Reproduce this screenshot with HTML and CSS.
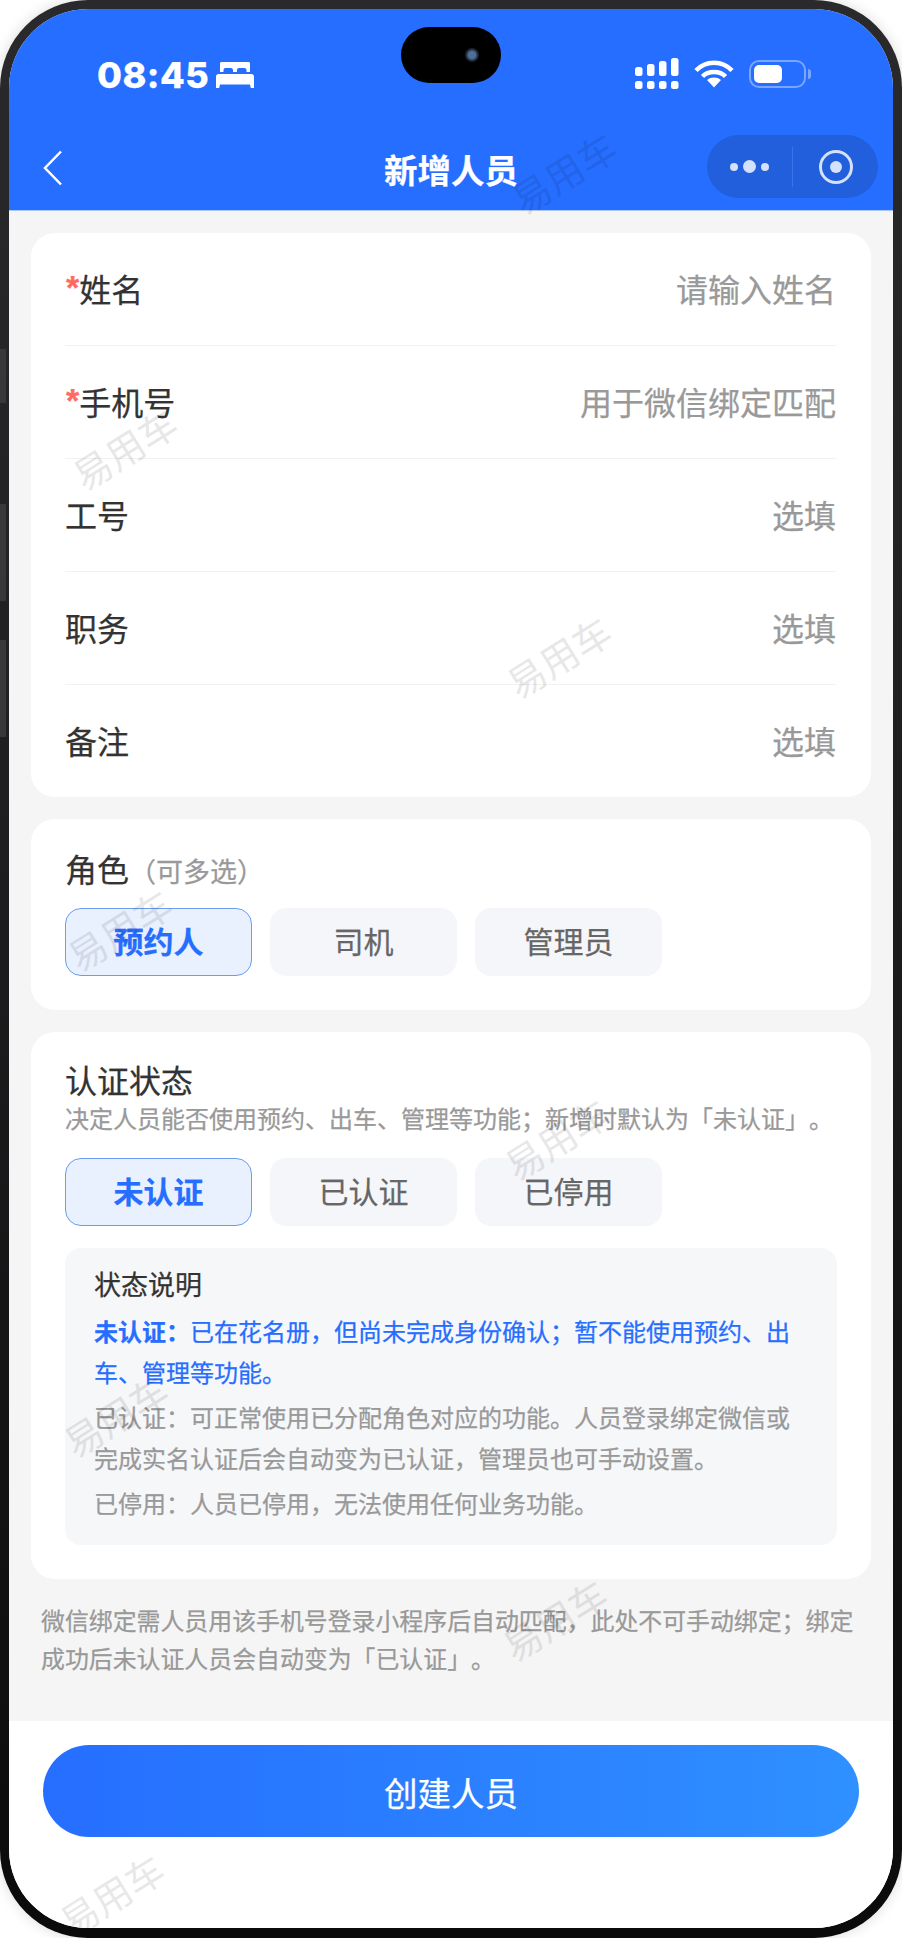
FILE: index.html
```html
<!DOCTYPE html>
<html lang="zh-CN">
<head>
    <meta charset="UTF-8">
    <meta name="viewport" content="width=device-width, initial-scale=1.0">
    <title>新增人员</title>
    <link rel="stylesheet" href="styles.css">
</head>
<body>

    <div class="phone">
        <div class="side-key side-key-1"></div>
        <div class="side-key side-key-2"></div>
        <div class="side-key side-key-3"></div>

        <div class="screen">
            <div class="header">
                <div class="status-bar">
                    <div class="status-left">
                        <span class="clock">08:45</span>
                        <svg class="bed" width="38" height="26" viewBox="0 0 38 26">
                            <path fill="#fff" d="M4 1.500C4 .7 4.700 0 5.500 0h27c.8 0 1.500.7 1.500 1.500V10h-3.500V8c0-1.100-.9-2-2-2h-5.500c-1.100 0-2 .9-2 2v2h-4V8c0-1.100-.9-2-2-2H9.500c-1.100 0-2 .9-2 2v2H4z"/>
                            <path fill="#fff" d="M2.500 12h33c1.400 0 2.500 1.100 2.500 2.500V26h-3.200l-.8-3.500H4L3.200 26H0V14.500C0 13.100 1.100 12 2.500 12z"/>
                        </svg>
                    </div>
                    <div class="island"><span class="camera"></span></div>
                    <div class="status-right">
                        <svg width="44" height="31" viewBox="0 0 44 31" fill="#fff">
                            <rect x="0" y="9" width="7.500" height="9" rx="2.500"/>
                            <rect x="12" y="6" width="7.500" height="12" rx="2.500"/>
                            <rect x="24" y="3" width="7.500" height="15" rx="2.500"/>
                            <rect x="36" y="0" width="7.500" height="18" rx="2.500"/>
                            <rect x="0" y="23" width="7.500" height="8" rx="2.500"/>
                            <rect x="12" y="23" width="7.500" height="8" rx="2.500"/>
                            <rect x="24" y="23" width="7.500" height="8" rx="2.500"/>
                            <rect x="36" y="23" width="7.500" height="8" rx="2.500"/>
                        </svg>
                        <svg class="wifi" width="40" height="29" viewBox="0 0 40 29" fill="none" stroke="#fff" stroke-width="4.500">
                            <path d="M2 11.500C11.500 1 28.500 1 38 11.500"/>
                            <path d="M8.500 17.500C14 11.500 26 11.500 31.500 17.500"/>
                            <path fill="#fff" stroke="none" d="M20 28.500l-7-7.500c3.700-3.300 10.300-3.300 14 0z"/>
                        </svg>
                        <div class="battery">
                            <div class="battery-body"><span class="battery-level"></span></div>
                            <span class="battery-cap"></span>
                        </div>
                    </div>
                </div>
                <div class="nav-bar">
                    <svg class="back" width="19" height="36" viewBox="0 0 19 36" fill="none" stroke="#fff" stroke-width="2.500">
                        <path d="M18 1.500L2 18l16 16.500"/>
                    </svg>
                    <div class="nav-title">新增人员</div>
                    <div class="capsule">
                        <div class="capsule-dots">
                            <span class="dot"></span>
                            <span class="dot dot-big"></span>
                            <span class="dot"></span>
                        </div>
                        <div class="capsule-line"></div>
                        <div class="capsule-target"><span></span></div>
                    </div>
                </div>
            </div>

            <div class="content">
                <div class="card form-card">
                    <div class="row">
                        <div class="row-label"><span class="star">*</span>姓名</div>
                        <div class="row-hint">请输入姓名</div>
                    </div>
                    <div class="row">
                        <div class="row-label"><span class="star">*</span>手机号</div>
                        <div class="row-hint">用于微信绑定匹配</div>
                    </div>
                    <div class="row">
                        <div class="row-label">工号</div>
                        <div class="row-hint">选填</div>
                    </div>
                    <div class="row">
                        <div class="row-label">职务</div>
                        <div class="row-hint">选填</div>
                    </div>
                    <div class="row">
                        <div class="row-label">备注</div>
                        <div class="row-hint">选填</div>
                    </div>
                </div>

                <div class="card role-card">
                    <div class="card-title">角色<span class="card-title-note">（可多选）</span></div>
                    <div class="chips">
                        <div class="chip active">预约人</div>
                        <div class="chip">司机</div>
                        <div class="chip">管理员</div>
                    </div>
                </div>

                <div class="card auth-card">
                    <div class="card-title">认证状态</div>
                    <div class="card-desc">决定人员能否使用预约、出车、管理等功能；新增时默认为「未认证」。</div>
                    <div class="chips">
                        <div class="chip active">未认证</div>
                        <div class="chip">已认证</div>
                        <div class="chip">已停用</div>
                    </div>
                    <div class="state-box">
                        <div class="state-title">状态说明</div>
                        <p class="state-text current"><b>未认证：</b>已在花名册，但尚未完成身份确认；暂不能使用预约、出车、管理等功能。</p>
                        <p class="state-text">已认证：可正常使用已分配角色对应的功能。人员登录绑定微信或完成实名认证后会自动变为已认证，管理员也可手动设置。</p>
                        <p class="state-text">已停用：人员已停用，无法使用任何业务功能。</p>
                    </div>
                </div>

                <p class="footnote">微信绑定需人员用该手机号登录小程序后自动匹配，此处不可手动绑定；绑定成功后未认证人员会自动变为「已认证」。</p>
            </div>

            <div class="footer">
                <div class="submit">创建人员</div>
            </div>

            <!-- watermark layer -->
            <div class="wm wm-1">易用车</div>
            <div class="wm wm-2">易用车</div>
            <div class="wm wm-3">易用车</div>
            <div class="wm wm-4">易用车</div>
            <div class="wm wm-5">易用车</div>
            <div class="wm wm-6">易用车</div>
            <div class="wm wm-7">易用车</div>
            <div class="wm wm-8">易用车</div>
        </div>
    </div>

</body>
</html>
```

FILE: styles.css
```css
* {
    box-sizing: border-box;
}

body {
    margin: 0;
    padding: 0;
    background-color: #fff;
    font-family: "Liberation Sans", "Noto Sans CJK SC", sans-serif;
    color: #333;
    text-spacing-trim: space-all;
    -webkit-text-stroke: 0.25px;
}

.phone {
    position: relative;
    width: 902px;
    height: 1938px;
    padding: 9px 9px 10px 9px;
    border-radius: 88px;
    background: linear-gradient(180deg, #2a2a2c 0%, #1c1c1e 50%, #0b0b0b 100%);
    box-shadow: 0 0 14px rgba(0, 0, 0, 0.14);
}

.side-key {
    position: absolute;
    left: 0;
    width: 6px;
    background-color: #38383a;
}

.side-key-1 {
    top: 349px;
    height: 54px;
}

.side-key-2 {
    top: 504px;
    height: 97px;
}

.side-key-3 {
    top: 640px;
    height: 97px;
}

.screen {
    position: relative;
    display: flex;
    flex-direction: column;
    height: 100%;
    border-radius: 79px;
    overflow: hidden;
    background-color: #f5f5f5;
}

/* top blue area */
.header {
    height: 202px;
    background-color: #266eff;
    border-bottom: 1px solid #a9c6ff;
}

.status-bar {
    position: relative;
    height: 117px;
    display: flex;
    justify-content: space-between;
}

.status-left {
    display: flex;
    align-items: center;
    gap: 7px;
    padding: 22px 0 0 88px;
    height: 110px;
}

.clock {
    font-family: Inter, "Liberation Sans", sans-serif;
    font-size: 36px;
    font-weight: 800;
    line-height: 40px;
    letter-spacing: 0.5px;
    color: #fff;
}

.island {
    position: absolute;
    left: 392px;
    top: 18px;
    width: 100px;
    height: 56px;
    border-radius: 28px;
    background-color: #000;
    display: flex;
    align-items: center;
    justify-content: flex-end;
    padding-right: 22px;
}

.camera {
    width: 14px;
    height: 14px;
    border-radius: 50%;
    background: radial-gradient(circle, #4f6f95 0 35%, #1b2330 60%);
}

.status-right {
    display: flex;
    align-items: center;
    gap: 15px;
    padding: 12px 82px 0 0;
    height: 117px;
}

.battery {
    display: flex;
    align-items: center;
    gap: 2px;
}

.battery-body {
    width: 57px;
    height: 28px;
    padding: 3px;
    border: 2px solid #7ba6ff;
    border-radius: 10px;
}

.battery-level {
    display: block;
    width: 28px;
    height: 18px;
    border-radius: 5px;
    background-color: #fff;
}

.battery-cap {
    width: 3px;
    height: 10px;
    border-radius: 0 3px 3px 0;
    background-color: #7ba6ff;
}

.nav-bar {
    position: relative;
    height: 84px;
    display: flex;
    align-items: center;
    justify-content: space-between;
    padding: 0 15px 0 34px;
}

.nav-title {
    position: absolute;
    left: 0;
    right: 0;
    text-align: center;
    font-size: 33.500px;
    font-weight: 700;
    color: #fff;
}

.capsule {
    display: flex;
    align-items: center;
    width: 171px;
    height: 63px;
    margin-bottom: 3px;
    border-radius: 32px;
    background-color: #215fdc;
}

.capsule-dots {
    flex: 1;
    display: flex;
    align-items: center;
    justify-content: center;
    gap: 5px;
}

.dot {
    width: 8px;
    height: 8px;
    border-radius: 50%;
    background-color: #d5e0fa;
}

.dot-big {
    width: 13px;
    height: 13px;
}

.capsule-line {
    width: 1px;
    height: 40px;
    background-color: #3a74e8;
}

.capsule-target {
    width: 85px;
    display: flex;
    justify-content: center;
}

.capsule-target span {
    display: flex;
    align-items: center;
    justify-content: center;
    width: 34px;
    height: 34px;
    border: 3px solid #d5e0fa;
    border-radius: 50%;
}

.capsule-target span::after {
    content: "";
    width: 12px;
    height: 12px;
    border-radius: 50%;
    background-color: #d5e0fa;
}

/* form */
.content {
    flex: 1;
    padding: 22px 22px 0 22px;
}

.card {
    background-color: #fff;
    border-radius: 24px;
    padding: 0 35px 0 34px;
    margin-bottom: 22px;
}

.row {
    height: 113px;
    display: flex;
    align-items: center;
    justify-content: space-between;
    padding-bottom: 3px;
    border-bottom: 1px solid #f2f2f2;
    font-size: 32px;
}

.row:last-child {
    height: 112px;
    border-bottom: none;
}

.row-label {
    display: flex;
    align-items: center;
}

.star {
    margin-left: 1px;
    font-size: 34px;
    font-weight: 700;
    color: #ff6b60;
}

.row-hint {
    color: #999;
}

.role-card {
    padding-top: 29px;
    height: 191px;
}

.auth-card {
    padding-top: 27px;
    height: 547px;
}

.card-title {
    font-size: 32px;
    line-height: 46px;
}

.card-title-note {
    font-size: 27px;
    color: #999;
}

.role-card .chips {
    margin-top: 12px;
}

.chips {
    display: flex;
    gap: 18px;
}

.chip {
    width: 187px;
    height: 68px;
    display: flex;
    align-items: center;
    justify-content: center;
    padding-bottom: 4px;
    border-radius: 16px;
    background-color: #f5f6fa;
    font-size: 30px;
    color: #666;
}

.chip.active {
    background-color: #e9f1ff;
    border: 1px solid #6a9cf0;
    color: #266eff;
    font-weight: 700;
}

.card-desc {
    font-size: 24px;
    line-height: 30px;
    color: #999;
    white-space: nowrap;
}

.auth-card .chips {
    margin-top: 23px;
}

.state-box {
    margin-top: 22px;
    padding: 20px 29px;
    height: 297px;
    width: 772px;
    border-radius: 16px;
    background-color: #f6f7f9;
}

.state-title {
    font-size: 27px;
    line-height: 36px;
}

.state-text {
    margin: 4px 0 0 0;
    font-size: 24px;
    line-height: 41px;
    color: #999;
}

.state-text.current {
    margin-top: 8px;
    color: #266eff;
}

.footnote {
    margin: 0;
    padding: 2px 10px 0 10px;
    font-size: 23.900px;
    line-height: 38px;
    color: #999;
}

/* bottom button */
.footer {
    height: 207px;
    padding: 24px 34px 0 34px;
    background-color: #fff;
}

.submit {
    height: 92px;
    display: flex;
    align-items: center;
    justify-content: center;
    border-radius: 46px;
    background: linear-gradient(90deg, #266eff 0%, #2f90ff 100%);
    font-size: 33.500px;
    color: #fff;
}

/* diagonal watermark, sits over everything */
.wm {
    position: absolute;
    width: 130px;
    text-align: center;
    font-size: 38px;
    font-weight: 400;
    line-height: 50px;
    color: #000;
    opacity: 0.09;
    white-space: nowrap;
    transform: rotate(-32deg);
    pointer-events: none;
    -webkit-text-stroke: 0;
}

.wm-1 { left: 491px; top: 141px; }
.wm-2 { left: 52px; top: 417px; }
.wm-3 { left: 486px; top: 625px; }
.wm-4 { left: 47px; top: 898px; }
.wm-5 { left: 484px; top: 1107px; }
.wm-6 { left: 43px; top: 1384px; }
.wm-7 { left: 482px; top: 1588px; }
.wm-8 { left: 39px; top: 1863px; }
```
